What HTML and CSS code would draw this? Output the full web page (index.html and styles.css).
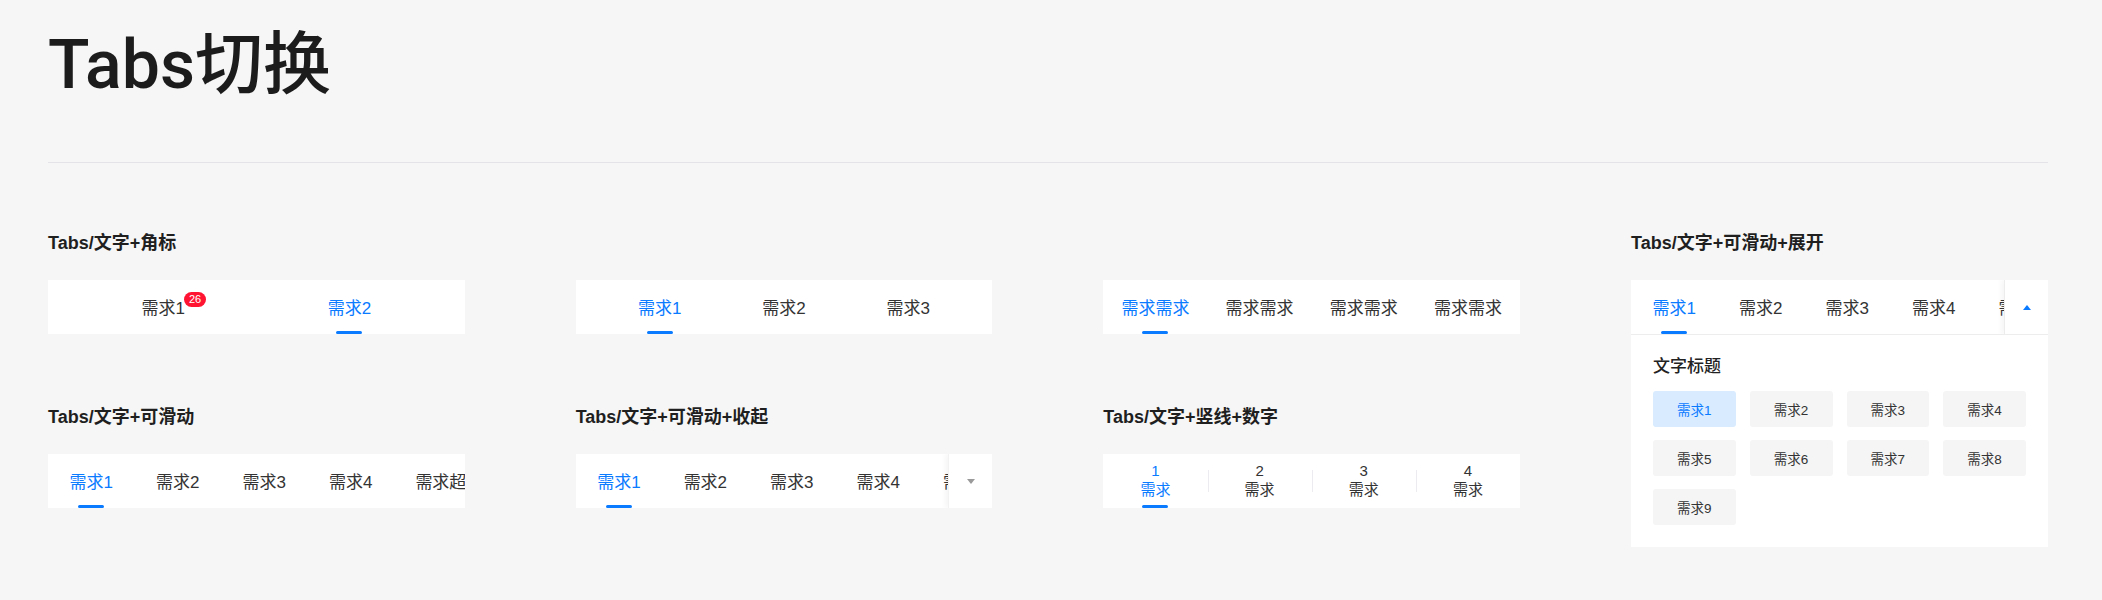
FILE: index.html
```html
<!DOCTYPE html>
<html lang="zh-CN">
<head>
<meta charset="utf-8">
<title>Tabs切换</title>
<link rel="stylesheet" href="styles.css">
</head>
<body>
<div class="page">
  <h1 class="title">Tabs切换</h1>
  <hr class="divider">
  <div class="board">
    <div class="board-main">
      <section class="demo">
        <div class="demo-title">Tabs/文字+角标</div>
        <div class="tabs tabs-padded">
          <div class="tab"><span class="tab-label">需求1<span class="badge">26</span></span></div>
          <div class="tab is-active"><span class="tab-label">需求2</span><i class="ink"></i></div>
        </div>
      </section>
      <section class="demo">
        <div class="demo-title"></div>
        <div class="tabs tabs-padded">
          <div class="tab is-active"><span class="tab-label">需求1</span><i class="ink"></i></div>
          <div class="tab"><span class="tab-label">需求2</span></div>
          <div class="tab"><span class="tab-label">需求3</span></div>
        </div>
      </section>
      <section class="demo">
        <div class="demo-title"></div>
        <div class="tabs tabs-equal">
          <div class="tab is-active"><span class="tab-label">需求需求</span><i class="ink"></i></div>
          <div class="tab"><span class="tab-label">需求需求</span></div>
          <div class="tab"><span class="tab-label">需求需求</span></div>
          <div class="tab"><span class="tab-label">需求需求</span></div>
        </div>
      </section>
      <section class="demo">
        <div class="demo-title">Tabs/文字+可滑动</div>
        <div class="tabs tabs-scroll">
          <div class="tab is-active"><span class="tab-label">需求1</span><i class="ink"></i></div>
          <div class="tab"><span class="tab-label">需求2</span></div>
          <div class="tab"><span class="tab-label">需求3</span></div>
          <div class="tab"><span class="tab-label">需求4</span></div>
          <div class="tab"><span class="tab-label">需求超长</span></div>
        </div>
      </section>
      <section class="demo">
        <div class="demo-title">Tabs/文字+可滑动+收起</div>
        <div class="tabs tabs-scroll">
          <div class="tabs-track">
            <div class="tab is-active"><span class="tab-label">需求1</span><i class="ink"></i></div>
            <div class="tab"><span class="tab-label">需求2</span></div>
            <div class="tab"><span class="tab-label">需求3</span></div>
            <div class="tab"><span class="tab-label">需求4</span></div>
            <div class="tab"><span class="tab-label">需求5</span></div>
          </div>
          <div class="tabs-more">
            <svg width="8" height="5" viewBox="0 0 8 5"><path d="M0 0H8L4 5Z" fill="#9a9a9a"/></svg>
          </div>
        </div>
      </section>
      <section class="demo">
        <div class="demo-title">Tabs/文字+竖线+数字</div>
        <div class="tabs tabs-equal tabs-lines">
          <div class="tab tab-stack is-active"><span class="tab-num">1</span><span class="tab-word">需求</span><i class="ink"></i></div>
          <div class="tab tab-stack"><span class="tab-num">2</span><span class="tab-word">需求</span></div>
          <div class="tab tab-stack"><span class="tab-num">3</span><span class="tab-word">需求</span></div>
          <div class="tab tab-stack"><span class="tab-num">4</span><span class="tab-word">需求</span></div>
        </div>
      </section>
    </div>
    <div class="board-side">
      <section class="demo">
        <div class="demo-title">Tabs/文字+可滑动+展开</div>
        <div class="tabs tabs-scroll tabs-open">
          <div class="tabs-track">
            <div class="tab is-active"><span class="tab-label">需求1</span><i class="ink"></i></div>
            <div class="tab"><span class="tab-label">需求2</span></div>
            <div class="tab"><span class="tab-label">需求3</span></div>
            <div class="tab"><span class="tab-label">需求4</span></div>
            <div class="tab"><span class="tab-label">需求5</span></div>
          </div>
          <div class="tabs-more tabs-more-line">
            <svg width="8" height="5" viewBox="0 0 8 5"><path d="M4 0L8 5H0Z" fill="#0a7aff"/></svg>
          </div>
        </div>
        <div class="panel">
          <div class="panel-title">文字标题</div>
          <div class="chips">
            <div class="chip is-active">需求1</div>
            <div class="chip">需求2</div>
            <div class="chip">需求3</div>
            <div class="chip">需求4</div>
            <div class="chip">需求5</div>
            <div class="chip">需求6</div>
            <div class="chip">需求7</div>
            <div class="chip">需求8</div>
            <div class="chip">需求9</div>
          </div>
        </div>
      </section>
    </div>
  </div>
</div>
</body>
</html>
```

FILE: styles.css
```css
* {
  box-sizing: border-box;
}

body {
  margin: 0;
  background: #f6f6f6;
  font-family: "Liberation Sans", "Noto Sans CJK SC", sans-serif;
  color: #222;
}

.page {
  width: 2102px;
  padding: 27px 54px 0 48px;
}

.title {
  margin: 0;
  font-family: Roboto, "Noto Sans CJK SC", sans-serif;
  font-size: 68px;
  line-height: 76px;
  font-weight: 500;
  color: #1c1c1c;
}

.divider {
  margin: 59px 0 0;
  border: 0;
  height: 1px;
  background: #e3e3e8;
}

.board {
  margin-top: 68px;
  display: flex;
  align-items: flex-start;
  gap: 111px;
}

.board-main {
  flex: 1;
  min-width: 0;
  display: grid;
  grid-template-columns: repeat(3, minmax(0, 1fr));
  column-gap: 111px;
  row-gap: 71px;
}

.board-side {
  flex: none;
  width: 417px;
}

.demo {
  min-width: 0;
}

.demo-title {
  height: 24px;
  margin-bottom: 25px;
  font-size: 18px;
  line-height: 24px;
  font-weight: 600;
  color: #1f1f1f;
  white-space: nowrap;
}

.tabs {
  display: flex;
  height: 54px;
  min-width: 0;
  background: #fff;
  overflow: hidden;
}

.tab {
  position: relative;
  display: flex;
  align-items: center;
  justify-content: center;
  font-size: 17px;
  color: #333;
  white-space: nowrap;
}

.tab.is-active {
  color: #0a7aff;
}

.tab-label {
  position: relative;
  padding-top: 4px;
  line-height: 24px;
}

.ink {
  position: absolute;
  left: 50%;
  bottom: 0;
  width: 26px;
  height: 3px;
  margin-left: -13px;
  border-radius: 2px;
  background: #0a7aff;
}

.badge {
  position: absolute;
  left: calc(100% - 1px);
  top: -1px;
  height: 15px;
  padding: 0 5px;
  border-radius: 8px;
  background: #ff1431;
  color: #fff;
  font-size: 11px;
  line-height: 15px;
}

.tabs-padded {
  padding: 0 22px;
}

.tabs-padded .tab,
.tabs-equal .tab {
  flex: 1 1 0;
  min-width: 0;
}

.tabs-scroll .tab {
  flex: none;
  padding: 0 21.5px;
}

.tabs-track {
  flex: 1;
  min-width: 0;
  display: flex;
  overflow: hidden;
}

.tabs-more {
  flex: none;
  width: 44px;
  display: flex;
  align-items: center;
  justify-content: center;
  background: #fff;
  box-shadow: -3px 0 5px rgba(0, 0, 0, 0.04);
  border-left: 1px solid #f2f2f2;
}

.tabs-more-line {
  border-left: 1px solid #ececec;
}

.tabs-open {
  height: 55px;
  border-bottom: 1px solid #ededed;
}

.tab-stack {
  flex-direction: column;
}

.tab-num {
  font-size: 15px;
  line-height: 18px;
}

.tab-word {
  font-size: 15px;
  line-height: 20px;
}

.tabs-lines .tab + .tab::before {
  content: "";
  position: absolute;
  left: 0;
  top: 16px;
  width: 1px;
  height: 22px;
  background: #ebebf0;
}

.panel {
  background: #fff;
  padding: 20px 22px 22px;
}

.panel-title {
  margin-bottom: 12px;
  font-size: 17px;
  line-height: 24px;
  font-weight: 500;
  color: #222;
}

.chips {
  display: grid;
  grid-template-columns: repeat(4, 1fr);
  column-gap: 14px;
  row-gap: 13px;
}

.chip {
  height: 36px;
  display: flex;
  align-items: center;
  justify-content: center;
  border-radius: 3px;
  background: #f5f5f5;
  color: #333;
  font-size: 13.5px;
}

.chip.is-active {
  background: #d8ebff;
  color: #0a7aff;
}
```
